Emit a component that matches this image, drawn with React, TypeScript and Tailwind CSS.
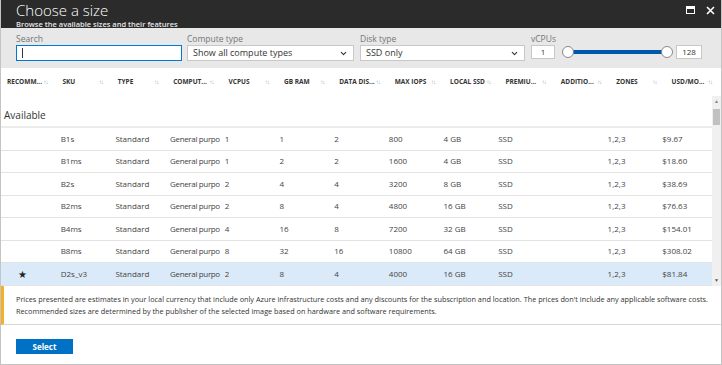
import React from 'react';
import { ChevronDown } from 'lucide-react';

type Row = {
    sku: string;
    vcpus: string;
    ram: string;
    disks: string;
    iops: string;
    ssd: string;
    price: string;
    recommended?: boolean;
};

const columns = [
    'RECOMM...', 'SKU', 'TYPE', 'COMPUT...', 'VCPUS', 'GB RAM', 'DATA DIS...',
    'MAX IOPS', 'LOCAL SSD', 'PREMIU...', 'ADDITIO...', 'ZONES', 'USD/MO...',
];

const rows: Row[] = [
    { sku: 'B1s', vcpus: '1', ram: '1', disks: '2', iops: '800', ssd: '4 GB', price: '$9.67' },
    { sku: 'B1ms', vcpus: '1', ram: '2', disks: '2', iops: '1600', ssd: '4 GB', price: '$18.60' },
    { sku: 'B2s', vcpus: '2', ram: '4', disks: '4', iops: '3200', ssd: '8 GB', price: '$38.69' },
    { sku: 'B2ms', vcpus: '2', ram: '8', disks: '4', iops: '4800', ssd: '16 GB', price: '$76.63' },
    { sku: 'B4ms', vcpus: '4', ram: '16', disks: '8', iops: '7200', ssd: '32 GB', price: '$154.01' },
    { sku: 'B8ms', vcpus: '8', ram: '32', disks: '16', iops: '10800', ssd: '64 GB', price: '$308.02' },
    { sku: 'D2s_v3', vcpus: '2', ram: '8', disks: '4', iops: '4000', ssd: '16 GB', price: '$81.84', recommended: true },
];

const gridCols = 'grid grid-cols-[repeat(13,minmax(0,1fr))]';

const Cell: React.FC<{ children?: React.ReactNode }> = ({ children }) => (
    <div className="pl-[5px] whitespace-nowrap">{children}</div>
);

const Select: React.FC<{ value: string; width: string }> = ({ value, width }) => (
    <div className={`${width} h-[16px] bg-white border border-[#c8c8c8] flex items-center justify-between pl-[5px] pr-[5px] text-[9px] text-[#333]`}>
        <span>{value}</span>
        <ChevronDown size={9} strokeWidth={3} className="text-[#333]" />
    </div>
);

export default function App() {
    return (
        <div
            className="w-[722px] h-[365px] flex flex-col bg-white border-x border-b border-[#c4c4c4] overflow-hidden"
            style={{ fontFamily: '"Open Sans", "Noto Sans", sans-serif' }}
        >
            {/* Title bar */}
            <div className="h-[28px] shrink-0 bg-[#2b2b2b] flex justify-between pl-[15px] pr-[6px]">
                <div className="flex flex-col">
                    <span className="text-[15px] font-light text-white leading-[18px] pt-[1px]">Choose a size</span>
                    <span className="text-[7.5px] font-semibold text-[#e6e6e6] leading-[10px]">Browse the available sizes and their features</span>
                </div>
                <div className="flex items-start gap-[11px] pt-[5px]">
                    <div className="w-[9px] h-[8px] border border-white border-t-[3px] mt-[1px]" />
                    <svg width="9" height="9" viewBox="0 0 9 9" className="mt-[1px]">
                        <path d="M1 1 L8 8 M8 1 L1 8" stroke="white" strokeWidth="1.6" />
                    </svg>
                </div>
            </div>

            {/* Filters */}
            <div className="h-[40px] shrink-0 bg-[#e8e8e8] flex items-start gap-[5px] pl-[15px] pt-[5px]">
                <div className="flex flex-col gap-[1px]">
                    <span className="text-[8.5px] text-[#767676] leading-[11px]">Search</span>
                    <div className="w-[166px] h-[16px] bg-white border border-[#0078d4] flex items-center pl-[5px]">
                        <div className="w-px h-[10px] bg-[#333]" />
                    </div>
                </div>
                <div className="flex flex-col gap-[1px]">
                    <span className="text-[8.5px] text-[#767676] leading-[11px]">Compute type</span>
                    <Select value="Show all compute types" width="w-[167px]" />
                </div>
                <div className="flex flex-col gap-[1px] ml-[1px]">
                    <span className="text-[8.5px] text-[#767676] leading-[11px]">Disk type</span>
                    <Select value="SSD only" width="w-[165px]" />
                </div>
                <div className="flex flex-col gap-[1px] ml-[1px]">
                    <span className="text-[8.5px] text-[#767676] leading-[11px]">vCPUs</span>
                    <div className="flex items-center">
                        <div className="w-[24px] h-[14px] bg-white border border-[#c8c8c8] text-[8px] text-[#333] flex items-center justify-center">1</div>
                        <div className="relative w-[113px] h-[14px] ml-[6px] flex items-center">
                            <div className="mx-[7px] flex-1 h-[4px] bg-[#0058ad]" />
                            <div className="absolute left-[1px] top-[1px] w-[12px] h-[12px] rounded-full bg-white border border-[#888]" />
                            <div className="absolute right-[1px] top-[1px] w-[12px] h-[12px] rounded-full bg-white border border-[#888]" />
                        </div>
                        <div className="w-[26px] h-[14px] ml-[2px] bg-white border border-[#c8c8c8] text-[8px] text-[#333] flex items-center justify-center">128</div>
                    </div>
                </div>
            </div>

            {/* Column headers */}
            <div className={`${gridCols} h-[28px] shrink-0 items-center`}>
                {columns.map(c => (
                    <div key={c} className="flex items-center justify-between pl-[6px] pr-[9px] overflow-hidden whitespace-nowrap">
                        <span className="text-[6.5px] font-bold text-[#333]">{c}</span>
                        <span className="text-[6px] text-[#a8a8a8] tracking-[-1px]">↑↓</span>
                    </div>
                ))}
            </div>

            {/* Body */}
            <div className="h-[190px] shrink-0 flex">
                <div className="flex-1 min-w-0 flex flex-col">
                    <div className="h-[30px] flex items-end pl-[3px] pb-[3px] text-[10px] text-[#333]">Available</div>
                    <div className="border-t-2 border-[#ebebeb]">
                        {rows.map(r => (
                            <div
                                key={r.sku}
                                className={`${gridCols} h-[22.5px] items-center text-[8px] text-[#444] border-b border-[#e3e3e3] ${r.recommended ? 'bg-[#dbeaf8]' : ''}`}
                            >
                                <div className="pl-[17px] text-[10px] text-[#222] leading-none">{r.recommended ? '★' : ''}</div>
                                <Cell>{r.sku}</Cell>
                                <Cell>Standard</Cell>
                                <div className="pl-[5px] whitespace-nowrap tracking-[-0.35px]">General purpo</div>
                                <Cell>{r.vcpus}</Cell>
                                <Cell>{r.ram}</Cell>
                                <Cell>{r.disks}</Cell>
                                <Cell>{r.iops}</Cell>
                                <Cell>{r.ssd}</Cell>
                                <Cell>SSD</Cell>
                                <Cell />
                                <Cell>1,2,3</Cell>
                                <Cell>{r.price}</Cell>
                            </div>
                        ))}
                    </div>
                </div>
                {/* Scrollbar */}
                <div className="w-[9px] bg-[#f0f0f0] flex flex-col items-center">
                    <span className="text-[5px] text-[#888] leading-none mt-[3px]">▲</span>
                    <div className="w-[7px] h-[16px] bg-[#c1c1c1] mt-[5px]" />
                    <div className="flex-1" />
                    <span className="text-[5px] text-[#555] leading-none mb-[3px]">▼</span>
                </div>
            </div>

            {/* Notice */}
            <div className="h-[39px] shrink-0 border-l-[3px] border-[#f5b02a] border-b border-b-[#d6d6d6] pl-[12px] pt-[7px] text-[7.3px] leading-[12px] text-[#333]">
                <p className="whitespace-nowrap">Prices presented are estimates in your local currency that include only Azure infrastructure costs and any discounts for the subscription and location. The prices don't include any applicable software costs.</p>
                <p className="whitespace-nowrap">Recommended sizes are determined by the publisher of the selected image based on hardware and software requirements.</p>
            </div>

            {/* Footer */}
            <div className="flex-1 pl-[15px] pt-[14px]">
                <button className="w-[57px] h-[15px] bg-[#0072c6] text-white text-[8px] font-bold flex items-center justify-center">
                    Select
                </button>
            </div>
        </div>
    );
}
